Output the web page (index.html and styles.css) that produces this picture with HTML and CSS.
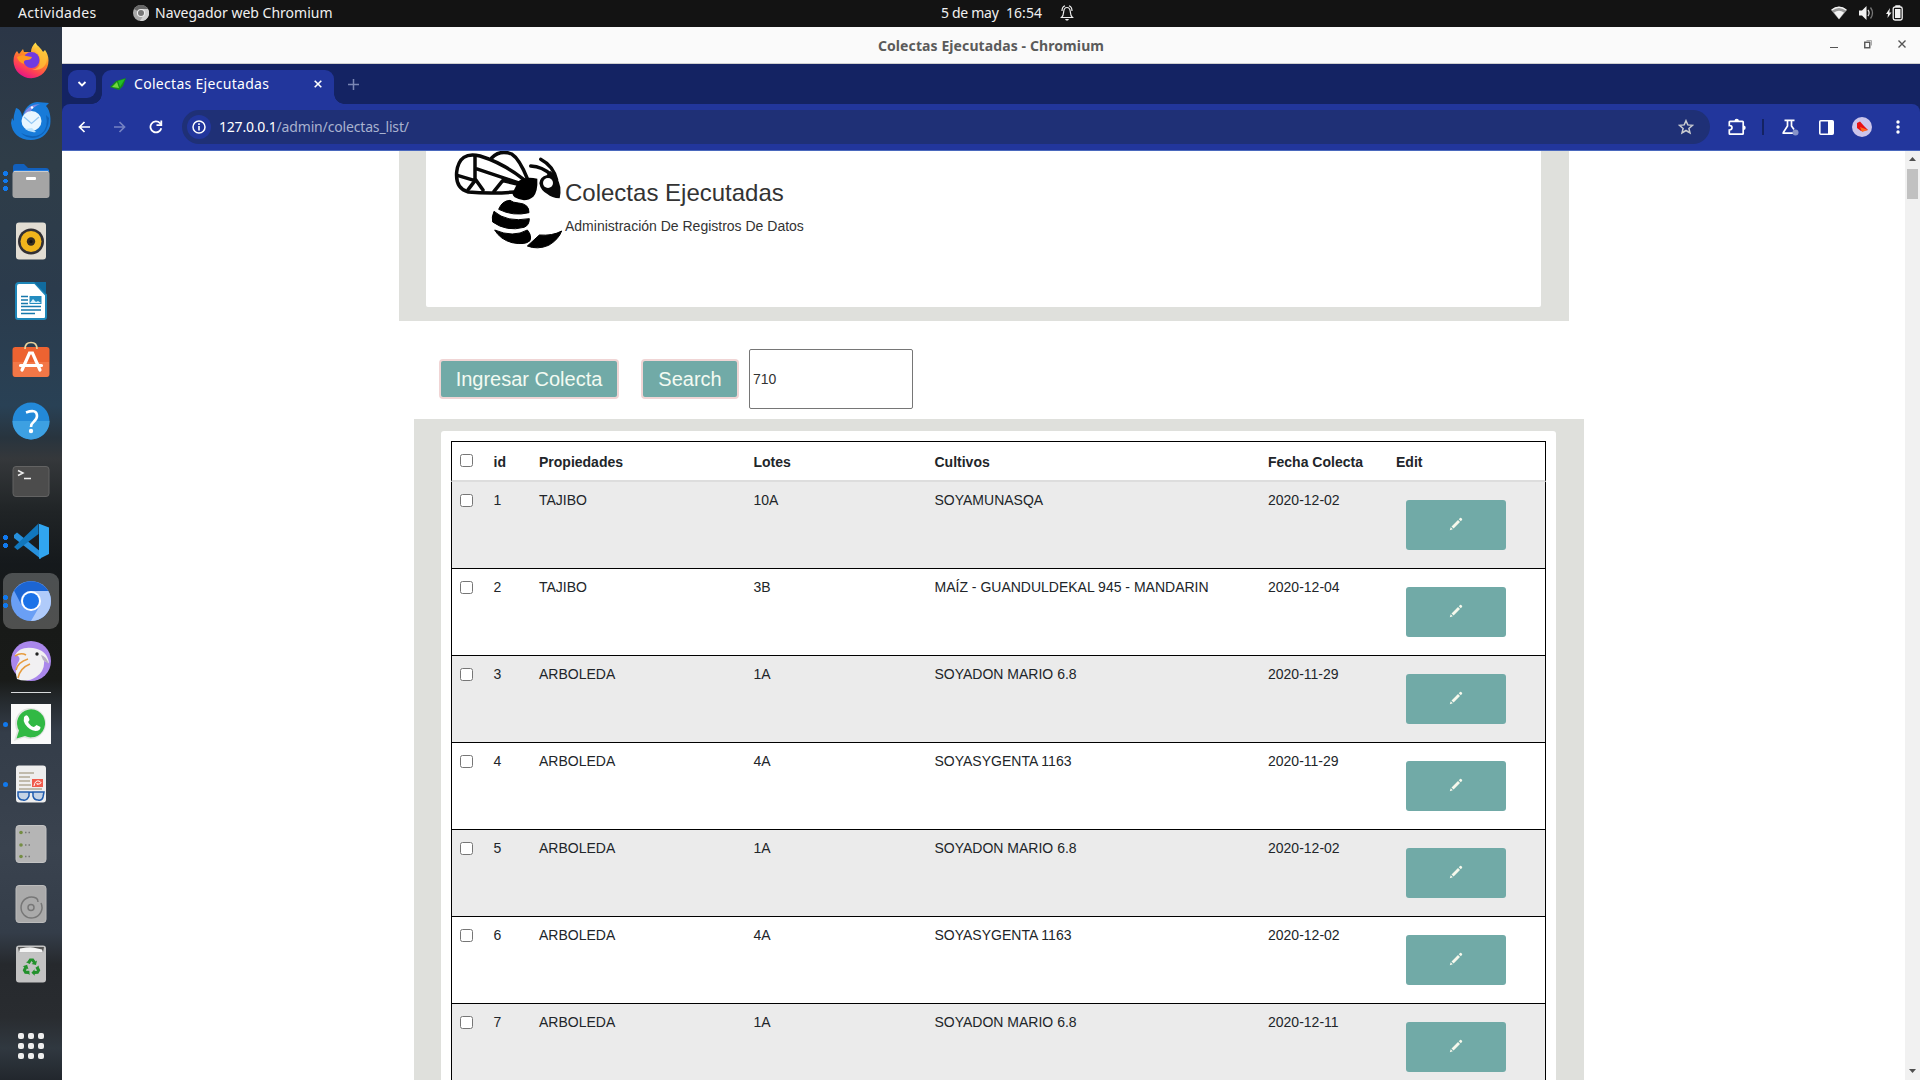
FILE: index.html
```html
<!DOCTYPE html>
<html lang="es">
<head>
<meta charset="utf-8">
<title>Colectas Ejecutadas</title>
<link rel="stylesheet" href="styles.css">
</head>
<body>
<header class="topbar">
  <span class="activities">Actividades</span>
  <svg class="app-icon" width="16" height="16" viewBox="0 0 16 16"><circle cx="8" cy="8" r="8" fill="#a9a9a9"/><path d="M8 8L1 4A8 8 0 0 1 15 4Z" fill="#666"/><path d="M8 4H15A8 8 0 0 1 7 16L12 8Z" fill="#d0d0d0"/><circle cx="8" cy="8" r="4.1" fill="#eee"/><circle cx="8" cy="8" r="3" fill="#777"/></svg>
  <span class="app-name">Navegador web Chromium</span>
  <span class="date">5 de may</span><span class="time">16:54</span>
  <svg class="bell" width="14" height="16" viewBox="0 0 14 16" fill="none" stroke="#eee" stroke-width="1.2"><path d="M1.5 12.5C3.5 11 3.5 9 3.7 6.5C4 4 5 2.5 7 2.5S10 4 10.3 6.5C10.500 9 10.500 11 12.500 12.500ZM2 6C2 3.500 3 1.500 5 .8M12 6C12 3.500 11 1.500 9 .8"/><path d="M5 14h4l-1 1.500H6Z" fill="#eee" stroke="none"/></svg>
  <div class="tray">
    <svg width="16" height="14" viewBox="0 0 16 14"><path d="M0 4Q8-2.500 16 4L8 13.500Z" fill="#999"/><path d="M3 6.500Q8 3 13 6.500L8 13Z" fill="#f2f2f2"/><path d="M.7 4Q8-1.500 15.300 4" fill="none" stroke="#f2f2f2" stroke-width="1.300"/></svg>
    <svg width="15" height="14" viewBox="0 0 15 14"><path d="M0 4.500h3L7.500 0v14L3 9.500H0Z" fill="#f2f2f2"/><path d="M9 4q2.200 3 0 6" fill="none" stroke="#ddd" stroke-width="1.300"/><path d="M11.500 1.500q4 5.500 0 11" fill="none" stroke="#777" stroke-width="1.300"/></svg>
    <svg width="17" height="16" viewBox="0 0 17 16"><path d="M4 3L0 9H2L1.500 13L5.500 7.500H3.300Z" fill="#f2f2f2"/><rect x="7.200" y="2" width="9" height="13" rx="1.800" fill="none" stroke="#f2f2f2" stroke-width="1.300"/><path d="M9.300.200h5V2h-5ZM9 4h5.500v9H9Z" fill="#f2f2f2"/></svg>
  </div>
</header>
<div class="desktop">
<nav class="dock">
  <div class="slot"><svg width="40" height="40" viewBox="0 0 40 40"><defs><linearGradient id="ff" x1=".8" y1="0" x2=".3" y2="1"><stop offset="0" stop-color="#fff44f"/><stop offset=".45" stop-color="#ff8a25"/><stop offset=".75" stop-color="#ff4055"/><stop offset="1" stop-color="#e3118a"/></linearGradient></defs><path d="M6 10L8 13L12 8L13 11L20 11C20 7 22 4 24.500 1.500C26 5 30 7 32 11L34 9C36 12 37.500 15 37.500 19.500A17.500 17.500 0 0 1 2.500 20C2.500 15 4 12 6 10Z" fill="url(#ff)"/><circle cx="20.500" cy="19" r="8" fill="#713be0"/><path d="M6 16q5-3 9-1l6 1q-1 3-5 3t-3 4q-6-2-7-7" fill="#ff9a1f"/><path d="M24 9q5 4 5 11q0 8-8 9q15 1 15-13l-5-6-4-5Z" fill="#ffc43a" opacity=".75"/></svg></div>
  <div class="slot"><svg width="40" height="40" viewBox="0 0 40 40"><path d="M5 7C9 8 11 12 11 16C14 7 18 2 26 1L38 2L35 5C40 10 40 20 39 25C36 34 29 39 20 39C8 39 1 32 0 22L1 17L3 20C2 15 4 11 5 7Z" fill="#187bd9"/><path d="M13 13Q17 3 29 3Q22 6 20 10Q16 12 13 13" fill="#8189e4"/><path d="M35 14Q38 27 30 33Q21 38 10 32Q17 39 27 36Q38 31 38 17" fill="#0f62b8"/><circle cx="20.500" cy="20" r="10" fill="#e9f6ff"/><path d="M13 16L20.500 22.500L28 16" stroke="#94c8f3" stroke-width="1.300" fill="none"/><path d="M14 28Q19 32 25 31L21 27Z" fill="#b9e1fc"/><circle cx="21" cy="6.500" r="1.300" fill="#fff"/></svg></div>
  <div class="slot running r3"><svg width="40" height="40" viewBox="0 0 40 40"><path d="M2 6q0-3 3-3h8l4 4h18q3 0 3 3v8H2Z" fill="#1260bd"/><path d="M2 12q0-3 3-3h33v8H2Z" fill="#237ce0"/><rect x="1.500" y="10" width="37" height="27" rx="3" fill="#a5a5a5"/><path d="M3 10.500h34" stroke="#ccc"/><rect x="15" y="16" width="10" height="3" rx="1" fill="#fff"/></svg></div>
  <div class="slot"><svg width="40" height="40" viewBox="0 0 40 40"><rect x="5" y="1.500" width="30" height="37" rx="3" fill="#e2ddd3"/><circle cx="20" cy="20.500" r="13" fill="#323034"/><circle cx="20" cy="20.500" r="10.500" fill="#f1b51c"/><circle cx="20" cy="20.500" r="4.200" fill="#332b21"/><circle cx="20" cy="20.500" r="1.600" fill="#111"/></svg></div>
  <div class="slot"><svg width="40" height="40" viewBox="0 0 40 40"><path d="M8 2h16l11 12v22q0 2-2 2H7q-2 0-2-2V5q0-3 3-3" fill="#fff" stroke="#1e86b8" stroke-width="2"/><path d="M23 1h12v12Z" fill="#116b9e"/><path d="M10 15.500h7M10 19h7M10 22.500h7M10 25.500h20M10 29h20M10 32.500h14" stroke="#1678ac" stroke-width="1.400"/><rect x="18.500" y="15" width="12" height="8" fill="#238cc0"/><path d="M19 22l3-4 3 3 2-1 3 2Z" fill="#d7f0fb"/></svg></div>
  <div class="slot"><svg width="40" height="40" viewBox="0 0 40 40"><rect x="1.500" y="6" width="37" height="30" rx="3" fill="#ed6331"/><path d="M2 21h36v12q0 3-3 3H5q-3 0-3-3Z" fill="#f27747"/><path d="M14 8Q14 1.500 20 1.500T26 8" fill="none" stroke="#e9d29b" stroke-width="1.700"/><path d="M11 29L18.500 12h3L29 29M9.500 24.500h21" fill="none" stroke="#fff" stroke-width="3.200" stroke-linecap="round"/></svg></div>
  <div class="slot"><svg width="40" height="40" viewBox="0 0 40 40"><circle cx="20" cy="20" r="18.500" fill="#2389d8"/><path d="M1.500 20h37A18.500 18.500 0 0 1 1.500 20" fill="#3da0e2"/><path d="M15 11.500q11-4 11 3.500q0 3-3.500 6q-2.500 2-2.500 5" fill="none" stroke="#fff" stroke-width="2.600"/><circle cx="20" cy="30" r="2.200" fill="#fff"/></svg></div>
  <div class="slot"><svg width="40" height="40" viewBox="0 0 40 40"><rect x="2" y="5.500" width="36" height="30" rx="3" fill="#4c4c4c" stroke="#636363"/><path d="M7 9.500l5 2.500-5 2.500M13 17.500h7" fill="none" stroke="#eee" stroke-width="1.500"/></svg></div>
  <div class="slot running r2"><svg width="40" height="40" viewBox="0 0 40 40"><path d="M3 14L6 11.500L30 31V38L3 17Z" fill="#2790dc"/><path d="M27.500 2.500V13L6.500 29L3 26Z" fill="#1177bd"/><path d="M27.500 2.500L38 6.500V33L28 38V2.500Z" fill="#31a5f0"/></svg></div>
  <div class="slot running r2"><div class="active-app"><svg width="40" height="40" viewBox="0 0 40 40"><circle cx="20" cy="20" r="20" fill="#6a9ff5"/><path d="M20 10L3 10A20 20 0 0 1 37.300 10Z" fill="#1c65d2"/><path d="M3 9.500L11 25A10 10 0 0 1 20 10Z" fill="#1c65d2"/><path d="M20 10H37.300A20 20 0 0 1 20 40L28.700 25Z" fill="#b0cbfa"/><circle cx="20" cy="20" r="10" fill="#fff"/><circle cx="20" cy="20" r="8" fill="#1b72e8"/></svg></div></div>
  <div class="slot"><svg width="40" height="40" viewBox="0 0 40 40"><circle cx="20" cy="20" r="20" fill="#aa87ec"/><path d="M6 38Q3 27 8 20Q10 15 4 14Q9 5 22 7Q36 9 38 22L33 20Q34 30 25 36Q16 42 6 38" fill="#f1f0f2"/><path d="M4 15Q10 11 15 14M5 29Q7 21 17 18M7 37Q9 27 19 23" fill="none" stroke="#e79c3f" stroke-width="1.600"/><path d="M30 14Q35 15 38 23L32 19Z" fill="#b6aec2"/><circle cx="26" cy="13" r="1.700" fill="#222"/></svg></div>
  <hr class="dock-sep">
  <div class="slot running r1"><svg width="40" height="40" viewBox="0 0 40 40"><rect width="40" height="40" fill="#fafafa"/><path d="M3 37L6 27A15.500 15.500 0 1 1 13 33.500Z" fill="#e1e4e1"/><path d="M5.500 34.500L8 26.500A14 14 0 1 1 14 32Z" fill="#31b944"/><path d="M13 13q3-4 5 1l.5 2q-2 2-1 3 2 3 5 4 1 0 3-2l4 2q0 4-5 4Q18 26 14 20q-2-3-1-7" fill="#fff"/></svg></div>
  <div class="slot running r1"><svg width="40" height="40" viewBox="0 0 40 40"><rect x="5" y="1.500" width="30" height="37" rx="3" fill="#eee"/><path d="M8 9h15M8 13h11M8 17h11M8 21h12M8 25h23" stroke="#b1a995" stroke-width="1.500"/><rect x="21" y="15" width="11" height="8" fill="#f05b4c"/><path d="M23 22q1-6 5-5 4 2 0 3-3 1-2-1" fill="none" stroke="#fff"/><path d="M7 28h11v4q-2 5-6 4-4 0-5-4ZM22 28h11l-1 5q-1 4-5 3-4 0-5-4ZM18 29q2-2 4 0" fill="#c5d3e5" stroke="#205cae" stroke-width="1.500"/></svg></div>
  <div class="slot"><svg width="40" height="40" viewBox="0 0 40 40"><rect x="5" y="1.500" width="30" height="37" rx="3" fill="#b5b5b5" stroke="#c3c3c3"/><g fill="#748d43"><circle cx="10" cy="8.500" r="1.800"/><circle cx="10" cy="21" r="1.800"/><circle cx="10" cy="32.500" r="1.800"/></g><path d="M14 8.500h1.500m2 0h1.500M14 21h1.500m2 0h1.500M14 32.500h1.500m2 0h1.500" stroke="#777" stroke-width="1.500"/></svg></div>
  <div class="slot"><svg width="40" height="40" viewBox="0 0 40 40"><rect x="5" y="1.500" width="30" height="37" rx="3" fill="#aaa" stroke="#bbb"/><path d="M30 19A10.500 10.500 0 1 1 25 14M27 18q0-3-2-4" fill="none" stroke="#777" stroke-width="1.500"/><circle cx="20" cy="23.500" r="3" fill="none" stroke="#777" stroke-width="1.500"/></svg></div>
  <div class="slot"><svg width="40" height="40" viewBox="0 0 40 40"><rect x="5" y="1.500" width="30" height="37" rx="3" fill="#c3c3c3"/><path d="M7 3h26l-1 5.500H8Z" fill="#555"/><path d="M9 4.500q10-2 13-1l9 2 1 3H8Z" fill="#f5f5f5"/><g fill="#23912c"><path id="arm" d="M16.500 17.500L18.500 14.500H22.500L24.500 17.500L26 16.500L25 21L20.500 20L22 19L20.500 17L18.700 20L15 18.200Z"/><use href="#arm" transform="rotate(120 20.500 23.500)"/><use href="#arm" transform="rotate(240 20.500 23.500)"/></g></svg></div>
  <div class="slot apps"><svg width="26" height="26" viewBox="0 0 26 26" fill="#eee"><rect width="6" height="6" rx="2"/><rect x="10" width="6" height="6" rx="2"/><rect x="20" width="6" height="6" rx="2"/><rect y="10" width="6" height="6" rx="2"/><rect x="10" y="10" width="6" height="6" rx="2"/><rect x="20" y="10" width="6" height="6" rx="2"/><rect y="20" width="6" height="6" rx="2"/><rect x="10" y="20" width="6" height="6" rx="2"/><rect x="20" y="20" width="6" height="6" rx="2"/></svg></div>
</nav>
<main class="window">
  <div class="titlebar">
    <span class="win-title">Colectas Ejecutadas - Chromium</span>
    <svg class="win-controls" width="78" height="12" viewBox="0 0 78 12" fill="none" stroke="#555"><path d="M0 8.500h8"/><path d="M36.500 1.500h5v5" stroke="#aaa"/><rect x="34.750" y="3.250" width="5" height="5.500" stroke-width="1.400"/><path d="M68.500 1.500l7 7M75.500 1.500l-7 7" stroke-width="1.400"/></svg>
  </div>
  <div class="tabstrip">
    <div class="tab-search"><svg width="10" height="8" viewBox="0 0 10 8"><path d="M1.500 2L5 5.500L8.500 2" fill="none" stroke="#fff" stroke-width="1.800"/></svg></div>
    <div class="tab">
      <svg class="favicon" width="16" height="12" viewBox="0 0 16 12"><path d="M0 9L6 3L16 0L13 8L9 12Z" fill="#168c18"/><path d="M2 9L7 4L9 10Z" fill="#72d93e"/><path d="M8 3L15 1L10 9Z" fill="#22be26"/></svg>
      <span class="tab-title">Colectas Ejecutadas</span>
      <svg class="tab-close" width="8" height="8" viewBox="0 0 8 8"><path d="M.7.7l6.600 6.600M7.300.7L.7 7.300" stroke="#fff" stroke-width="1.600"/></svg>
    </div>
    <svg class="new-tab" width="11" height="11" viewBox="0 0 11 11"><path d="M5.500 0v11M0 5.500h11" stroke="#7a86b5" stroke-width="1.500"/></svg>
  </div>
  <div class="toolbar">
    <svg class="back" width="12" height="12" viewBox="0 0 12 12" fill="none" stroke="#fff" stroke-width="1.700"><path d="M12 6H1.500M6.500 1L1.500 6L6.500 11"/></svg>
    <svg class="forward" width="12" height="12" viewBox="0 0 12 12" fill="none" stroke="#7583c3" stroke-width="1.700"><path d="M0 6h10.500M5.500 1L10.500 6L5.500 11"/></svg>
    <svg class="reload" width="14" height="14" viewBox="0 0 14 14" fill="none" stroke="#fff" stroke-width="1.800"><path d="M12.300 8.200A5.500 5.500 0 1 1 11 3.200L12 4.500"/><path d="M12.300.500V5.200H7.500"/></svg>
    <div class="omnibox">
      <span class="site-info"><svg width="14" height="14" viewBox="0 0 14 14"><circle cx="7" cy="7" r="6" fill="none" stroke="#fff" stroke-width="1.500"/><path d="M7 6v4.500M7 3.300v1.600" stroke="#fff" stroke-width="1.600"/></svg></span>
      <span class="url"><b>127.0.0.1</b>/admin/colectas_list/</span>
      <svg class="star" width="16" height="16" viewBox="0 0 16 16"><path d="M8 1.700L9.800 5.900L14.500 6.300L10.900 9.400L12 14L8 11.500L4 14L5.100 9.400L1.500 6.300L6.200 5.900Z" fill="none" stroke="#c9cbd0" stroke-width="1.500"/></svg>
    </div>
    <svg class="puzzle" width="18" height="18" viewBox="0 0 18 18"><path d="M2 3.300h12.500q.7 0 .7.700v11.500q0 .7-.7.700H2q-.7 0-.7-.7V12q2.700 0 2.700-2.300T1.300 7.500V4q0-.7.7-.7Z" fill="none" stroke="#fff" stroke-width="1.700"/><path d="M6.500 3a2.200 2.200 0 0 1 4.400 0M15.500 7.500a2.200 2.200 0 0 1 0 4.400" fill="#fff"/></svg>
    <i class="divider"></i>
    <svg class="flask" width="17" height="18" viewBox="0 0 17 18"><path d="M2.500 2.300h10M5.500 2.500V8L1.300 14.500V15.200H11M9.500 2.500V8L12 11.500" fill="none" stroke="#fff" stroke-width="1.700"/><circle cx="13.500" cy="14.500" r="3" fill="#8793c8"/></svg>
    <svg class="panel" width="15" height="15" viewBox="0 0 15 15"><rect x=".8" y=".8" width="13.400" height="13.400" rx="1" fill="none" stroke="#fff" stroke-width="1.600"/><path d="M9 1h5v13H9Z" fill="#fff"/></svg>
    <svg class="avatar" width="20" height="20" viewBox="0 0 20 20"><circle cx="10" cy="10" r="10" fill="#ccc5ea"/><path d="M5 6L8 4.500L12 9L16 13L9 14L5 11Z" fill="#e91111"/><path d="M8 10L16 13L10 15Z" fill="#ff6a1b"/></svg>
    <svg class="menu" width="4" height="14" viewBox="0 0 4 14" fill="#fff"><circle cx="2" cy="2" r="1.700"/><circle cx="2" cy="7" r="1.700"/><circle cx="2" cy="12" r="1.700"/></svg>
  </div>
  <div class="viewport">
    <div class="page">
      <section class="banner">
        <div class="banner-inner">
          <svg class="bee" width="110" height="104" viewBox="12 6 330 312"><g fill="none" stroke="#080808" stroke-width="10.500" stroke-linecap="round" stroke-linejoin="round"><path d="M226 98Q160 45 90 24Q28 8 20 72Q16 122 55 132Q120 138 195 132"/><path d="M125 30Q150 4 185 18Q208 32 232 92"/><path d="M75 24V92L99 126M22 82L75 98L55 124M78 62L210 106M202 108L158 98L132 130"/></g><path d="M205 100Q225 84 262 92Q264 130 250 146Q225 166 194 148Q182 138 192 126Z" fill="#000"/><path d="M300 68Q326 86 331 118Q333 138 329 151Q305 150 292 138Q272 128 268 106Q270 86 290 82Z" fill="#080808"/><circle cx="294" cy="105" r="15" fill="#fff"/><path d="M242 54Q278 56 302 80M272 34Q310 54 320 96" fill="none" stroke="#080808" stroke-width="10" stroke-linecap="round"/><path d="M146 184Q156 158 180 157Q188 164 206 165Q238 168 237 194Q190 206 146 184ZM132 190Q170 224 238 212Q238 232 222 238Q170 252 128 222Q124 208 132 190ZM134 246Q190 270 232 246Q246 262 240 278Q226 292 186 284Q150 274 134 246ZM232 294L268 261Q308 264 335 249Q326 274 296 292Q262 306 232 294Z" fill="#000" stroke="#000" stroke-width="3"/></svg>
          <div class="banner-text">
            <h1>Colectas Ejecutadas</h1>
            <p>Administración De Registros De Datos</p>
          </div>
        </div>
      </section>
      <form class="actions">
        <button type="button" class="btn insert">Ingresar Colecta</button>
        <button type="button" class="btn search">Search</button>
        <input type="text" class="query" value="710">
      </form>
      <section class="list">
        <div class="list-inner">
          <table class="records">
            <colgroup><col class="c-check"><col class="c-id"><col class="c-prop"><col class="c-lot"><col class="c-crop"><col class="c-date"><col class="c-edit"></colgroup>
            <thead><tr><th><input type="checkbox"></th><th>id</th><th>Propiedades</th><th>Lotes</th><th>Cultivos</th><th>Fecha Colecta</th><th>Edit</th></tr></thead>
            <tbody>
              <tr><td><input type="checkbox"></td><td>1</td><td>TAJIBO</td><td>10A</td><td>SOYAMUNASQA</td><td>2020-12-02</td><td><a class="edit"><svg width="14" height="14"><use href="#pencil"/></svg></a></td></tr>
              <tr><td><input type="checkbox"></td><td>2</td><td>TAJIBO</td><td>3B</td><td>MAÍZ - GUANDULDEKAL 945 - MANDARIN</td><td>2020-12-04</td><td><a class="edit"><svg width="14" height="14"><use href="#pencil"/></svg></a></td></tr>
              <tr><td><input type="checkbox"></td><td>3</td><td>ARBOLEDA</td><td>1A</td><td>SOYADON MARIO 6.8</td><td>2020-11-29</td><td><a class="edit"><svg width="14" height="14"><use href="#pencil"/></svg></a></td></tr>
              <tr><td><input type="checkbox"></td><td>4</td><td>ARBOLEDA</td><td>4A</td><td>SOYASYGENTA 1163</td><td>2020-11-29</td><td><a class="edit"><svg width="14" height="14"><use href="#pencil"/></svg></a></td></tr>
              <tr><td><input type="checkbox"></td><td>5</td><td>ARBOLEDA</td><td>1A</td><td>SOYADON MARIO 6.8</td><td>2020-12-02</td><td><a class="edit"><svg width="14" height="14"><use href="#pencil"/></svg></a></td></tr>
              <tr><td><input type="checkbox"></td><td>6</td><td>ARBOLEDA</td><td>4A</td><td>SOYASYGENTA 1163</td><td>2020-12-02</td><td><a class="edit"><svg width="14" height="14"><use href="#pencil"/></svg></a></td></tr>
              <tr><td><input type="checkbox"></td><td>7</td><td>ARBOLEDA</td><td>1A</td><td>SOYADON MARIO 6.8</td><td>2020-12-11</td><td><a class="edit"><svg width="14" height="14"><use href="#pencil"/></svg></a></td></tr>
            </tbody>
          </table>
        </div>
      </section>
    </div>
    <div class="scrollbar">
      <svg width="7" height="4" viewBox="0 0 7 4"><path d="M0 4L3.500 0L7 4Z" fill="#505050"/></svg>
      <i class="thumb"></i>
      <svg class="down" width="7" height="4" viewBox="0 0 7 4"><path d="M0 0L3.500 4L7 0Z" fill="#505050"/></svg>
    </div>
  </div>
</main>
</div>
<svg class="defs" width="0" height="0"><symbol id="pencil" viewBox="0 0 14 14"><path d="M.8 13.200l.9-3 2.100 2.100ZM2.500 9.400L9 3L11 5L4.600 11.500ZM9.800 2.200L11 1q.6-.5 1.200 0l.8.8q.5.600 0 1.200L11.800 4.200Z" fill="#f6f8ec"/></symbol></svg>
</body>
</html>
```
FILE: styles.css
```css
* { box-sizing: border-box; }
html, body { margin: 0; height: 1080px; overflow: hidden; }
body { font-family: "Liberation Sans", Arial, sans-serif; background: #fff; }
svg { display: block; flex: none; }
.defs { position: absolute; }

.topbar { height: 27px; padding-bottom: 1px; background: #131313; color: #f0f0f0; display: flex; align-items: center; font: 14px/26px "Noto Sans", sans-serif; white-space: nowrap; }
.topbar > span { padding-bottom: 1px; line-height: 25px; }
.activities { margin-left: 18px; width: 115px; letter-spacing: .35px; }
.app-icon { margin-right: 6px; }
.app-name { width: 786px; }
.date { width: 65px; letter-spacing: -.3px; }
.time { width: 54px; letter-spacing: .05px; }
.tray { margin-left: auto; margin-right: 17px; display: flex; align-items: center; gap: 12px; }

.desktop { display: flex; height: 1053px; }
.dock { width: 62px; flex: none; padding-top: 4px; background: linear-gradient(#2b3647 0, #2f3d48 13%, #2b3b4c 25%, #294155 36%, #28343e 39%, #35383b 41%, #202426 46%, #15191c 51%, #181a18 57%, #191b19 62%, #252a2e 64%, #343d49 67%, #3a434f 78%, #343d49 86%, #26292d 89%, #292c30 94%, #303840 97%, #22272d); }
.slot { height: 60px; display: flex; align-items: center; justify-content: center; }
.running { justify-content: flex-start; }
.running::before { content: ""; width: 5px; height: 5px; border-radius: 50%; background: #1179ed; margin: 0 6px 0 3px; flex: none; }
.r2::before { height: 13px; background: radial-gradient(circle 2.500px at 2.500px 2.500px, #1179ed 95%, transparent), radial-gradient(circle 2.500px at 2.500px 10.500px, #1179ed 95%, transparent); border-radius: 0; z-index: 1; }
.r3::before { height: 20px; border-radius: 0; background: radial-gradient(circle 2.500px at 2.500px 2.500px, #1179ed 95%, transparent), radial-gradient(circle 2.500px at 2.500px 10px, #1179ed 95%, transparent), radial-gradient(circle 2.500px at 2.500px 17.500px, #1179ed 95%, transparent); }
.running > svg { margin-left: -3px; }
.active-app { width: 56px; height: 56px; border-radius: 9px; background: rgba(255,255,255,.24); display: grid; place-items: center; margin-left: -11px; }
.dock-sep { width: 40px; height: 1px; border: 0; background: #d7d9db; margin: 1px auto; }
.apps { margin-top: 22px; }

.window { flex: 1; min-width: 0; display: flex; flex-direction: column; background: linear-gradient(#142363, #142363) 0 70px / 100% 20px no-repeat, #fff; }
.titlebar { height: 37px; background: #fafafa; border-bottom: 1px solid #cfcfcf; display: grid; grid-template-columns: 1fr auto 1fr; align-items: center; }
.win-title { grid-column: 2; padding-top: 1px; font: bold 14px/35px "Noto Sans", sans-serif; letter-spacing: .1px; color: #5b5b5b; white-space: nowrap; }
.win-controls { justify-self: end; margin-right: 12px; }

.tabstrip { height: 40px; background: #142363; display: flex; align-items: flex-start; padding: 6px 0 0 6px; }
.tab-search { width: 28px; height: 28px; border-radius: 9px; background: #22369c; display: grid; place-items: center; }
.tab { width: 232px; height: 34px; margin-left: 6px; border-radius: 9px 9px 0 0; background: #22369c; display: flex; align-items: center; padding: 0 12px 6px 8px; color: #fff; position: relative; }
.tab::before, .tab::after { content: ""; position: absolute; bottom: 0; width: 10px; height: 10px; }
.tab::before { left: -10px; background: radial-gradient(circle at 0 0, transparent 9.500px, #22369c 10px); }
.tab::after { right: -10px; background: radial-gradient(circle at 100% 0, transparent 9.500px, #22369c 10px); }
.tab-title { font: 14px/28px "Noto Sans", sans-serif; letter-spacing: .3px; margin-left: 8px; white-space: nowrap; }
.tab-close { margin-left: auto; }
.new-tab { margin: 9px 0 0 14px; }

.toolbar { height: 47px; background: #22369c; border-bottom: 1px solid #4a68bd; border-radius: 8px 8px 0 0; display: flex; align-items: center; padding: 0 20px 0 16px; }
.forward { margin-left: 24px; }
.reload { margin-left: 23px; }
.omnibox { width: 1528px; height: 34px; margin-left: 19px; border-radius: 17px; background: #1f3076; display: flex; align-items: center; padding: 0 16px 0 5px; }
.site-info { width: 24px; height: 24px; border-radius: 50%; background: #22369c; display: grid; place-items: center; }
.url { font: 14px/34px "Noto Sans", sans-serif; letter-spacing: -.16px; color: #a9b2cf; margin-left: 8px; white-space: nowrap; }
.url b { font-weight: 400; color: #fff; letter-spacing: -.2px; }
.star { margin-left: auto; }
.puzzle { margin-left: 18px; }
.divider { width: 2px; height: 16px; background: #142363; margin: 0 18px 0 16px; }
.panel { margin-left: 20px; }
.avatar { margin-left: 18px; }
.menu { margin-left: auto; }

.viewport { flex: 1; min-height: 0; display: flex; background: #fff; }
.page { flex: 1; min-width: 0; padding-left: 337px; overflow: hidden; }
.banner { width: 1170px; height: 170px; background: #dfe0dc; padding: 0 28px 14px 27px; }
.banner-inner { height: 156px; background: #fff; border-radius: 0 0 2px 2px; display: flex; padding-left: 28px; }
.bee { margin-right: 1px; margin-top: -1px; filter: blur(.7px); }
.banner-text { color: #333; }
.banner-text h1 { margin: 27px 0 0; font-size: 24px; font-weight: 400; line-height: 30px; }
.banner-text p { margin: 8px 0 0; font-size: 14px; line-height: 20px; }

.actions { display: flex; align-items: center; height: 60px; margin: 28px 0 10px 40px; }
.btn { height: 40px; border: 2px solid #f0d5d5; border-radius: 4px; background: #71aaa7; color: #f3faf2; font: 20px/34px "Liberation Sans", Arial, sans-serif; padding: 0; white-space: nowrap; }
.insert { width: 180px; }
.search { width: 98px; margin-left: 22px; }
.query { width: 164px; height: 60px; margin-left: 10px; border: 1px solid #767676; border-radius: 2px; padding: 1px 3px; font: 14px "Liberation Sans", Arial, sans-serif; color: #333; outline: none; }

.list { width: 1170px; height: 661px; margin-left: 15px; background: #dfe0dc; padding: 12px 28px 0 27px; overflow: hidden; }
.list-inner { background: #fff; border-radius: 3px; padding: 10px; }
.records { width: 1095px; table-layout: fixed; border-collapse: separate; border-spacing: 0; font-size: 14px; line-height: 20px; color: #212529; }
.c-check { width: 34.500px; } .c-id { width: 45.500px; } .c-prop { width: 214.500px; } .c-lot { width: 181px; } .c-crop { width: 333.500px; } .c-date { width: 128px; } .c-edit { width: 158px; }
.records th, .records td { text-align: left; vertical-align: top; padding: 8px; white-space: nowrap; }
.records th { height: 41px; padding: 10px 8px 7px; border-top: 1px solid #000; border-bottom: 2px solid #ddd; }
.records td { height: 87px; border-bottom: 1px solid #000; }
.records th:first-child, .records td:first-child { border-left: 1px solid #000; }
.records th:last-child, .records td:last-child { border-right: 1px solid #000; }
.records tbody tr:nth-child(odd) { background: #ebebeb; }
.records input { display: block; width: 13px; height: 13px; margin: 4px 0 0; }
.records th input { margin-top: 2px; }
.edit { width: 100px; height: 50px; margin: 10px 0 0 10px; padding-bottom: 2px; border-radius: 3px; background: #71aaa7; display: grid; place-items: center; }

.scrollbar { width: 15px; background: #f1f1f1; display: flex; flex-direction: column; align-items: center; padding: 6px 0 7px; }
.thumb { width: 11px; height: 30px; margin-top: 8px; background: #c1c1c1; }
.down { margin-top: auto; }
```
